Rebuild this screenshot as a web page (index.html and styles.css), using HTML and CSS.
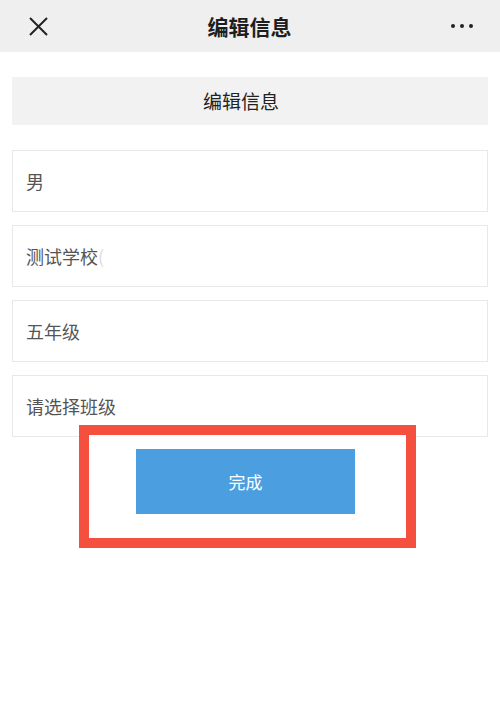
FILE: index.html
```html
<!DOCTYPE html>
<html lang="zh">
<head>
    <meta charset="UTF-8">
    <meta name="viewport" content="width=device-width, initial-scale=1.0">
    <title>编辑信息</title>
    <link rel="stylesheet" href="styles.css">
</head>
<body>
    <div class="topbar">
        <span class="close">
            <svg width="19" height="19" viewBox="0 0 19 19">
                <path d="M1 1L18 18M18 1L1 18" stroke="#222" stroke-width="2" fill="none"/>
            </svg>
        </span>
        <span class="topbar-title">编辑信息</span>
        <span class="more"><i></i><i></i><i></i></span>
    </div>

    <div class="form">
        <div class="form-head">编辑信息</div>
        <div class="field">男</div>
        <div class="field">测试学校<span class="fade">(</span></div>
        <div class="field">五年级</div>
        <div class="field">请选择班级</div>

        <!-- 红框标注 -->
        <div class="mark">
            <div class="btn">完成</div>
        </div>
    </div>
</body>
</html>
```

FILE: styles.css
```css
*{
    margin: 0;
    padding: 0;
    box-sizing: border-box;
}
body{
    background: #fff;
    font-family: "Noto Sans CJK SC", "Liberation Sans", sans-serif;
    color: #222;
}
.topbar{
    height: 52px;
    background: #efefef;
    display: flex;
    align-items: center;
    justify-content: space-between;
    padding: 0 27px 0 29px;
}
.close{
    width: 19px;
    height: 19px;
    display: flex;
}
.topbar-title{
    font-size: 21px;
    font-weight: bold;
    color: #1e1e1e;
}
.more{
    display: flex;
    gap: 5px;
    width: 22px;
}
.more i{
    width: 4px;
    height: 4px;
    border-radius: 50%;
    background: #222;
}

.form{
    padding: 25px 12px 0;
}
.form-head{
    height: 48px;
    background: #f2f2f2;
    font-size: 19px;
    line-height: 48px;
    text-align: center;
    padding-right: 18px;
    margin-bottom: 25px;
}
.field{
    height: 62px;
    border: 1px solid #e8e8e8;
    padding-left: 13px;
    display: flex;
    align-items: center;
    font-size: 18px;
    color: #555;
    margin-bottom: 13px;
}
.fade{
    color: #ddd;
}
.mark{
    width: 337px;
    height: 123px;
    margin: -25px 0 0 67px;        /*盖住上面输入框的下边*/
    border: 10px solid #f5503f;
    background: #fff;
    padding: 14px 0 0 47px;
}
.btn{
    width: 219px;
    height: 65px;
    background: #4b9fe0;
    color: #fff;
    font-size: 17px;
    line-height: 65px;
    text-align: center;
}
```
